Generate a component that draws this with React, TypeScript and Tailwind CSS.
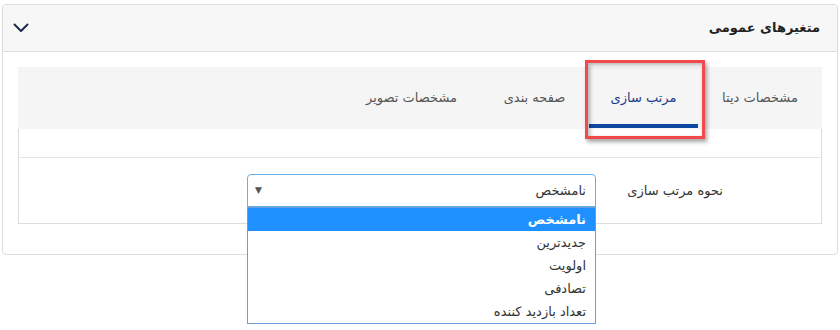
import React from 'react';

const tabs = [
  { label: 'مشخصات دیتا', w: 'w-[124px]' },
  { label: 'مرتب سازی', w: 'w-[109px]' },
  { label: 'صفحه بندی', w: 'w-[109px]' },
  { label: 'مشخصات تصویر', w: 'w-[137px]' },
];
const options = ['نامشخص', 'جدیدترین', 'اولویت', 'تصادفی', 'تعداد بازدید کننده'];

const Chevron: React.FC = () => (
  <svg width="16" height="10" viewBox="0 0 16 10" fill="none">
    <path d="M1.5 1.5 L8 8 L14.5 1.5" stroke="#1f2b4a" strokeWidth="2" strokeLinecap="round" strokeLinejoin="round" />
  </svg>
);

const App: React.FC = () => {
  const active = 1;
  return (
    <div
      dir="rtl"
      className="relative w-[840px] h-[330px] bg-white text-[#333] overflow-hidden"
      style={{ fontFamily: '"DejaVu Sans", sans-serif' }}
    >
      <div className="mt-[4px] mx-[2px] w-[836px] rounded-[4px] border border-[#dddddd]">
        {/* header */}
        <div className="flex h-[47px] items-center justify-between rounded-t-[4px] border-b border-[#dddddd] bg-[#f7f7f7] pr-[17px] pl-[10px]">
          <div className="text-[13px] font-bold text-[#222]">متغیرهای عمومی</div>
          <Chevron />
        </div>

        {/* body */}
        <div className="px-[15px] pt-[15px] pb-[30px]">
          <div className="flex h-[62px] items-stretch bg-[#f5f5f5]">
            {tabs.map((t, i) => (
              <div
                key={t.label}
                className={
                  i === active
                    ? `relative flex items-center justify-center ${t.w} text-[13px] text-[#1c3d8f]`
                    : `flex items-center justify-center ${t.w} text-[13px] text-[#555]`
                }
              >
                {t.label}
                {i === active && <div className="absolute bottom-[1px] left-0 right-0 h-[4px] bg-[#0e47a1]" />}
              </div>
            ))}
          </div>
          <div className="border-x border-b border-[#dddddd]">
            <div className="h-[29px] border-b border-[#e5e5e5]" />
            <div className="flex h-[65px] items-center">
              <div className="w-[225px] pr-[98px] text-[13px] text-[#333]">نحوه مرتب سازی</div>
              <div className="relative w-[349px]">
                <div className="flex h-[33px] items-center justify-between rounded-t-[4px] border border-[#66afe9] bg-white pr-[9px] pl-[7px] text-[13px]">
                  <span>نامشخص</span>
                  <span className="text-[9px] text-[#555]">▼</span>
                </div>
                <div className="absolute top-full right-0 z-10 w-[349px] border border-[#6f9bd6] bg-white">
                  {options.map((o, i) => (
                    <div
                      key={o}
                      className={
                        i === 0
                          ? 'flex h-[23px] items-center bg-[#1e90ff] pr-[9px] text-[13px] font-bold text-white'
                          : 'flex h-[23px] items-center pr-[9px] text-[13px] text-[#333]'
                      }
                    >
                      {o}
                    </div>
                  ))}
                </div>
              </div>
            </div>
          </div>
        </div>
      </div>

      {/* annotation box */}
      <div className="absolute left-[585px] top-[60px] h-[79px] w-[120px] border-[3px] border-[#f24a4a] shadow-[2px_3px_4px_rgba(0,0,0,0.35),inset_2px_2px_4px_rgba(0,0,0,0.3)]" />
    </div>
  );
};

export default App;
